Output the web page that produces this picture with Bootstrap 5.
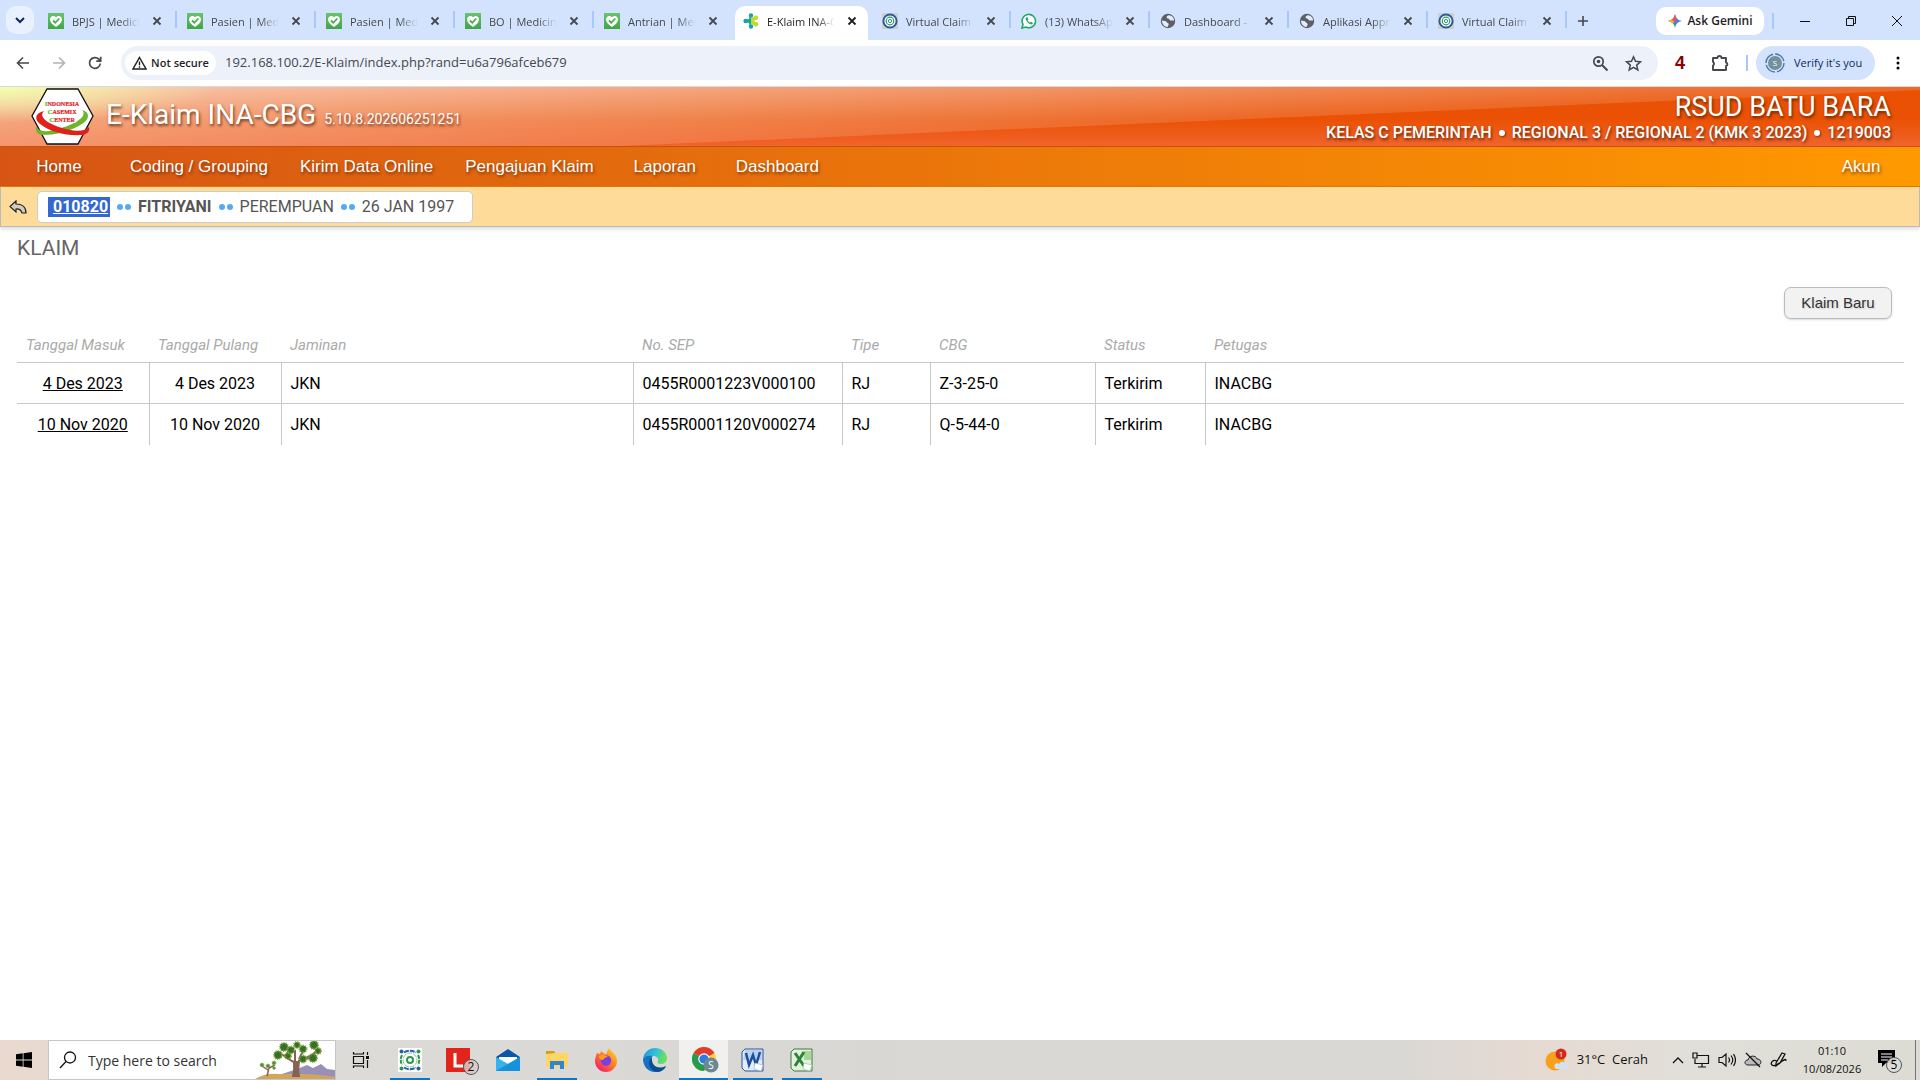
<!DOCTYPE html>
<html lang="id">
<head>
<meta charset="utf-8">
<meta name="viewport" content="width=device-width, initial-scale=1">
<title>E-Klaim INA-CBG</title>
<link rel="stylesheet" href="https://cdn.jsdelivr.net/npm/bootstrap@5.3.0/dist/css/bootstrap.min.css">
<style>
:root{--ui:"Open Sans","Noto Sans",sans-serif;--app:Roboto,"Noto Sans",sans-serif;--nav:"Liberation Sans",Arial,sans-serif}
body{font-family:var(--app);background:#fff;color:#000}
svg{display:block;flex:none}
button{border:0;background:none;padding:0;color:inherit}
/* browser frame */
.strip{background:#d3e3fd;height:40px;font:12px/16px var(--ui);color:#45484d}
.strip-menu{width:28px;height:28px;border-radius:10px;background:#eaf1fe;margin:6px 4px 0 6px}
.tab-slot{flex:0 1 139px;min-width:0;height:34px;margin-top:6px;padding-left:10px;padding-bottom:4px;position:relative;color:inherit;text-decoration:none}
.tab-name{width:70px;overflow:hidden;white-space:nowrap;font-size:11px;line-height:18px;padding-top:2px;-webkit-mask-image:linear-gradient(90deg,#000 70%,transparent 97%);mask-image:linear-gradient(90deg,#000 70%,transparent 97%)}
.tab-x{width:16px;height:16px;margin-left:7px}
.tab-slot.sep{border-right:2px solid #a8c7fa;border-image:linear-gradient(transparent 18%,#a8c7fa 18%,#a8c7fa 65%,transparent 65%) 1}
.tab-on{color:#1f1f1f}
.tab-on::before{content:"";position:absolute;inset:0 4px 0 2px;background:#fff;border-radius:10px 10px 0 0}
.tab-on>*{position:relative}
.win-btn{width:46px;height:34px}
.gemini{height:28px;width:108px;border-radius:10px;background:#fff;font-size:12px;font-weight:600;color:#1f1f1f}
.vline{width:2px;height:16px;background:#a8c7fa}
.toolbar{height:47px;border-bottom:1px solid #d5dbe3;background:#fff;font-family:var(--ui);padding-left:5px}
.tool{width:36px;height:34px}
.omnibox{height:34px;border-radius:17px;background:#ecf1fa;margin-left:8px}
.chip{height:24px;width:91px;border-radius:12px;background:#fff;font-size:11px;font-weight:600;color:#1f1f1f}
.url{border:0;background:none;font-size:13px;color:#45484d;padding:0 0 0 1px;outline:0}
.verify{height:34px;width:119px;border-radius:17px;background:#d3e3fd;font-size:11px;color:#0b2a5c}
.dots-menu{width:45px}
.ext-four{width:44px;font:700 18px/24px "Liberation Sans",sans-serif;color:#8b0000}
/* application header */
.hero{height:59px;background:linear-gradient(#ea5104 55%,#f1642c);color:#fff;text-shadow:1px 2px 3px rgba(60,20,0,.75)}
.gloss{position:absolute;inset:0;width:100%;height:100%}
.hero h1{font-size:28px;line-height:36px;font-weight:400}
.logo{margin-left:31px;text-shadow:none}
.brand{margin-left:11px}
.ver{font-size:14px}
.rs{padding-right:29px}
.rs-name{font-size:27px;line-height:32px}
.rs-info{font-size:16px;line-height:20px;font-weight:500}
.rs-info i{display:inline-block;width:6px;height:6px;border-radius:50%;background:#fff;margin:0 7px 2px;box-shadow:1px 1px 2px rgba(60,20,0,.6)}
.menu{height:41px;background:linear-gradient(90deg,#d65514,#ff9900);border-top:1px solid #c9520b;border-bottom:1px solid #e57a06;font-family:var(--nav);font-size:17px;padding:0 4px}
.menu a{min-width:110px;padding:0 16px;color:#fff;text-align:center;text-decoration:none;line-height:40px;text-shadow:1px 2px 3px rgba(60,20,0,.6)}
.patient{height:40px;background:#ffdb99;border:1px solid #bbb;border-top:0;box-shadow:0 2px 4px rgba(0,0,0,.15);padding-left:8px}
.patient-card{height:32px;border:1px solid #ccc;border-radius:5px;background:#fff;padding:0 18px 0 10px;margin-left:10px;font-size:16px;color:#555;white-space:nowrap}
.sel{background:#3367d1;color:#fff;font-weight:700;line-height:20px;padding:0 2px 0 5px;text-decoration:underline}
.dots i{width:6px;height:6px;border-radius:50%;background:#55aaf0}
.dots{gap:2px;margin:0 7px}
/* claim list */
.content{padding:8px 16px 0 17px}
.page-title{font-size:21px;line-height:26px;color:#666;font-weight:400}
.actions{padding:26px 12px 8px 0}
.btn-new{width:108px;height:32px;border:1px solid #bbb;border-radius:7px;background:#f2f2f2;font-family:var(--nav);font-size:15px;color:#333;box-shadow:0 1px 2px rgba(0,0,0,.15);text-shadow:1px 1px 2px rgba(0,0,0,.15)}
.claims{table-layout:fixed;width:100%;border-collapse:collapse}
.claims th{font-size:15px;line-height:20px;font-style:italic;font-weight:400;color:#aaa;padding:8px 9px 7px;height:35px}
.claims td{font-size:16px;line-height:24px;padding:9px 9px 7px;height:41px;border-top:1px solid #c8c8c8}
.claims td+td{border-left:1px solid #c8c8c8}
.claims a{color:#000}
/* taskbar */
.taskbar{height:40px;background:linear-gradient(90deg,#ead9cf 0,#dcdbd8 18%,#d8d7d4 45%,#d9d8d5 72%,#e6dad2 80%,#e0dfd8 88%,#dcdcd4);font-family:var(--ui);color:#111}
.start{width:48px;height:40px}
.find{width:288px;height:40px;background:#fff;border:1px solid #c6c6c6;padding-left:10px}
.find input{border:0;outline:0;background:none;width:140px;font-size:14px;padding:0;margin-left:11px;color:#333}
.find input::placeholder{color:#333;opacity:1}
.task{width:49px;height:40px;position:relative}
.task-view{width:49px}
.open::after{content:"";position:absolute;left:5px;right:4px;bottom:0;height:2px;background:#0078d7}
.live{background:#f0f0ee}
.live::after{left:0;right:0}
.temp{font-size:13px;white-space:pre}
.clock{width:80px;font-size:11px;line-height:18px}
.notice{margin-right:11px}
</style>
</head>
<body class="d-flex flex-column min-vh-100">
<svg width="0" height="0" class="position-absolute" aria-hidden="true">
<defs>
<linearGradient id="gr" x2="0" y2="1"><stop stop-color="#67c46b"/><stop offset="1" stop-color="#3fa648"/></linearGradient>
<symbol id="med" viewBox="0 0 16 16"><path fill="url(#gr)" d="M0 0h16v16H0z"/><path fill="#fff" d="M8 14C4 11.500 2 9 2 6.300 2 3.500 5.500 1.800 8 4.200 10.500 1.800 14 3.500 14 6.300 14 9 12 11.500 8 14z"/><path d="M5 7.500l2.300 2.300L11.300 5.500" fill="none" stroke="#46ad4e" stroke-width="1.800"/></symbol>
<symbol id="x" viewBox="0 0 16 16"><path d="M4.500 4.500l7 7M11.500 4.500l-7 7" stroke="currentColor" stroke-width="1.800"/></symbol>
<symbol id="vc" viewBox="0 0 16 16"><path fill="#cfcfcf" d="M0 0h16v16H0z"/><circle cx="8" cy="8" r="6.600" fill="#fff" stroke="#2c5d93" stroke-width="2"/><circle cx="8" cy="8" r="3.800" fill="none" stroke="#28a067" stroke-width="1.200"/><circle cx="8" cy="8" r="1.600" fill="none" stroke="#2f8d8d"/></symbol>
<symbol id="globe" viewBox="0 0 16 16"><circle cx="8" cy="8" r="7.200" fill="#5b5f66"/><path d="M9 2.200c-1.500.3-2.600 1-2.400 2.200.3 1.300 2.200.8 2.800 2 .5 1.300 2.200 1.400 4.600 1 .2-2.600-2-5-5-5.200zM2 7.500c2 .2 4.200.3 4.700 1.600.4 1.200 2 .9 2 2.200 0 1.200-1 1.500-.9 2.600C4.500 14 1.800 11 2 7.500z" fill="#e3ecfb"/></symbol>
<symbol id="eka" viewBox="0 0 16 16"><g fill="#13a89e"><circle cx="8" cy="2.500" r="2.200"/><circle cx="2.600" cy="8" r="2.200"/><circle cx="8" cy="13.500" r="2.200"/><path d="M7 2l-1 4-4 1v2l4 1 1 4h1V2z"/></g><g fill="#c5d92d"><circle cx="13" cy="4.800" r="2.200"/><circle cx="13" cy="11.200" r="2.200"/><path d="M8 5l5-2 1 3-3 2 3 2-1 3-5-2z"/></g></symbol>
</defs>
</svg>

<header>
<div class="strip d-flex align-items-start">
<button class="strip-menu d-flex align-items-center justify-content-center" aria-label="Cari tab"><svg width="12" height="12" viewBox="0 0 12 12"><path d="M2 4l4 4 4-4" fill="none" stroke="#0b2a5c" stroke-width="2"/></svg></button>
<nav class="d-flex flex-grow-1" style="min-width:0">
<a href="#" class="tab-slot sep d-flex align-items-center"><svg width="16" height="16"><use href="#med"/></svg><span class="tab-name ms-2">BPJS | Medicine</span><svg class="tab-x"><use href="#x"/></svg></a>
<a href="#" class="tab-slot sep d-flex align-items-center"><svg width="16" height="16"><use href="#med"/></svg><span class="tab-name ms-2">Pasien | Medicine</span><svg class="tab-x"><use href="#x"/></svg></a>
<a href="#" class="tab-slot sep d-flex align-items-center"><svg width="16" height="16"><use href="#med"/></svg><span class="tab-name ms-2">Pasien | Medicine</span><svg class="tab-x"><use href="#x"/></svg></a>
<a href="#" class="tab-slot sep d-flex align-items-center"><svg width="16" height="16"><use href="#med"/></svg><span class="tab-name ms-2">BO | Medicine</span><svg class="tab-x"><use href="#x"/></svg></a>
<a href="#" class="tab-slot d-flex align-items-center"><svg width="16" height="16"><use href="#med"/></svg><span class="tab-name ms-2">Antrian | Medicine</span><svg class="tab-x"><use href="#x"/></svg></a>
<a href="#" class="tab-slot tab-on d-flex align-items-center"><svg width="16" height="16"><use href="#eka"/></svg><span class="tab-name ms-2">E-Klaim INA-CBG</span><svg class="tab-x"><use href="#x"/></svg></a>
<a href="#" class="tab-slot sep d-flex align-items-center"><svg width="16" height="16"><use href="#vc"/></svg><span class="tab-name ms-2">Virtual Claim</span><svg class="tab-x"><use href="#x"/></svg></a>
<a href="#" class="tab-slot sep d-flex align-items-center"><svg width="16" height="16" viewBox="0 0 16 16"><path d="M1 15l1-3.600A6.700 6.700 0 1 1 4.700 14z" fill="#fff" stroke="#22a866" stroke-width="1.600"/><path d="M5 4.500c-1.500 2 2.500 7 6 7l1-1.600-2-1.200-1 .8C7.800 9 7 8 6.600 7.200l.8-1L6.500 4.300z" fill="#22a866"/></svg><span class="tab-name ms-2">(13) WhatsApp</span><svg class="tab-x"><use href="#x"/></svg></a>
<a href="#" class="tab-slot sep d-flex align-items-center"><svg width="16" height="16"><use href="#globe"/></svg><span class="tab-name ms-2">Dashboard -</span><svg class="tab-x"><use href="#x"/></svg></a>
<a href="#" class="tab-slot sep d-flex align-items-center"><svg width="16" height="16"><use href="#globe"/></svg><span class="tab-name ms-2">Aplikasi Approval</span><svg class="tab-x"><use href="#x"/></svg></a>
<a href="#" class="tab-slot sep d-flex align-items-center"><svg width="16" height="16"><use href="#vc"/></svg><span class="tab-name ms-2">Virtual Claim</span><svg class="tab-x"><use href="#x"/></svg></a>
<button class="win-btn d-flex align-items-center ps-2 mt-1" aria-label="Tab baru"><svg width="16" height="16" viewBox="0 0 16 16"><path d="M8 3v10M3 8h10" stroke="#45484d" stroke-width="1.600"/></svg></button>
</nav>
<div class="d-flex align-items-center pt-1">
<button class="gemini d-flex align-items-center justify-content-center gap-1"><svg width="16" height="16" viewBox="0 0 16 16"><defs><linearGradient id="gem" x1="0" y1="1" x2="1" y2="0"><stop offset=".25" stop-color="#35a56b"/><stop offset=".5" stop-color="#3b82f6"/><stop offset=".8" stop-color="#3b82f6"/></linearGradient></defs><path d="M8 1c.7 4 3 6.300 7 7-4 .7-6.300 3-7 7-.7-4-3-6.300-7-7 4-.7 6.300-3 7-7z" fill="url(#gem)"/><path d="M8 1c.7 4 1.500 5 3 6L7 8.500 1 8c4-.7 6.300-3 7-7z" fill="#ee5350"/><path d="M1 8l4-1 2.500 2L5 10.500C4 9 3 8.500 1 8z" fill="#f5b924"/></svg>Ask Gemini</button>
<span class="vline ms-2"></span>
<button class="win-btn d-flex align-items-center justify-content-center ms-2" aria-label="Minimalkan"><svg width="12" height="12"><path d="M1 6.500h10" stroke="#111"/></svg></button>
<button class="win-btn d-flex align-items-center justify-content-center" aria-label="Pulihkan"><svg width="12" height="12"><path d="M1.500 3.500h7v7h-7zM3.500 3V1.500h7v7H9" fill="none" stroke="#111"/></svg></button>
<button class="win-btn d-flex align-items-center justify-content-center" aria-label="Tutup"><svg width="12" height="12"><path d="M1 1l10 10M11 1L1 11" stroke="#111"/></svg></button>
</div>
</div>
<div class="toolbar d-flex align-items-center">
<button class="tool d-flex align-items-center justify-content-center" aria-label="Kembali"><svg width="16" height="16" viewBox="0 0 16 16"><path d="M14 8H3M8 2.500L2.500 8 8 13.500" fill="none" stroke="#45484d" stroke-width="1.600"/></svg></button>
<button class="tool d-flex align-items-center justify-content-center" aria-label="Maju"><svg width="16" height="16" viewBox="0 0 16 16"><path d="M2 8h11M8 2.500L13.500 8 8 13.500" fill="none" stroke="#b0b3b8" stroke-width="1.600"/></svg></button>
<button class="tool d-flex align-items-center justify-content-center" aria-label="Muat ulang"><svg width="16" height="16" viewBox="0 0 16 16"><path d="M13.300 8.500A5.400 5.400 0 1 1 11.800 4.200L13.600 6M13.700 1.800V6.200H9.300" fill="none" stroke="#45484d" stroke-width="1.700"/></svg></button>
<div class="omnibox d-flex align-items-center flex-grow-1 ps-1">
<button class="chip d-flex align-items-center justify-content-center gap-1"><svg width="15" height="14" viewBox="0 0 15 14"><path d="M7.500 1.500L14 13H1zM7.500 5.500v3.700M7.500 10.300v1.400" fill="none" stroke="#1f1f1f" stroke-width="1.400"/></svg>Not secure</button>
<input class="url flex-grow-1 ms-2" aria-label="Alamat" value="192.168.100.2/E-Klaim/index.php?rand=u6a796afceb679">
<svg class="me-3" width="17" height="17" viewBox="0 0 17 17"><circle cx="6.500" cy="6.500" r="4.700" fill="none" stroke="#45484d" stroke-width="1.700"/><path d="M10 10l5.500 5.500" stroke="#45484d" stroke-width="2"/><circle cx="6.500" cy="6.500" r="1.800" fill="#45484d"/></svg>
<svg class="me-3" width="17" height="17" viewBox="0 0 17 17"><path d="M8.500 1.800l2 4.500 4.900.5-3.700 3.300 1.100 4.900-4.300-2.600L4.200 15l1.100-4.900L1.600 6.800l4.900-.5z" fill="none" stroke="#45484d" stroke-width="1.500"/></svg>
</div>
<strong class="ext-four text-center">4</strong>
<button class="tool d-flex align-items-center justify-content-center" aria-label="Ekstensi"><svg width="18" height="18" viewBox="0 0 18 18"><path d="M2 4h4.500a2 2 0 0 1 4 0H15v4.500a1.800 1.800 0 0 1 0 3.500V16H2v-4.500a2 2 0 0 0 0-3.500z" fill="none" stroke="#45484d" stroke-width="1.900" stroke-linejoin="round"/></svg></button>
<span class="vline ms-2"></span>
<button class="verify d-flex align-items-center ms-2 ps-2 gap-2"><svg width="22" height="22" viewBox="0 0 22 22"><circle cx="11" cy="11" r="9" fill="none" stroke="#4a78a8" stroke-width="1.400" stroke-dasharray="12 2.100"/><circle cx="11" cy="11" r="7" fill="#74909a"/><text x="11" y="14" font-family="Open Sans" font-size="8" fill="#fff" text-anchor="middle">S</text></svg>Verify it's you</button>
<button class="dots-menu d-flex align-items-center justify-content-center" aria-label="Menu"><svg width="4" height="16"><circle cx="2" cy="3" r="1.500"/><circle cx="2" cy="8" r="1.500"/><circle cx="2" cy="13" r="1.500"/></svg></button>
</div>
</header>

<div class="hero position-relative d-flex justify-content-between">
<svg class="gloss" viewBox="0 0 1920 59" preserveAspectRatio="none"><defs><linearGradient id="gl" gradientUnits="userSpaceOnUse" x1="620" y1="59" x2="616" y2="-29"><stop stop-color="#fff" stop-opacity=".14"/><stop offset="1" stop-color="#fff" stop-opacity=".7"/></linearGradient><radialGradient id="yl" gradientUnits="userSpaceOnUse" cx="0" cy="0" r="220" gradientTransform="scale(1 .16)"><stop stop-color="#f2ffae"/><stop offset="1" stop-color="#f2ffae" stop-opacity="0"/></radialGradient></defs><path d="M0 0H1920V3L620 59H0z" fill="url(#gl)"/><path d="M0 0h240v40H0z" fill="url(#yl)"/></svg>
<div class="position-relative d-flex align-items-center">
<svg class="logo" width="64" height="57" viewBox="0 0 64 57"><path d="M16 1h31l15 27-15 28H16L1 28z" fill="#fff" stroke="#111" stroke-width="1.300"/><path d="M51 22c8 2 8 9 0 14-12 8-28 11-40 11-5-1-7-4-6-8 3 4 9 5 16 3.500C41 38 58 29 51 22z" fill="#6fb52c"/><path d="M13 23c-9 2-10 8-4 13 10 8 26 12 42 11 6-1 8-4 7-8-3 3-8 4.500-15 3.500C25 40 5 31 13 23z" fill="#e0201b"/><g font-family="Liberation Serif,serif" font-weight="700" font-size="6" fill="#e0201b" stroke="#e0201b" stroke-width=".2" text-anchor="middle"><text x="31" y="18"><tspan font-size="7" fill="#6fb52c" stroke="#6fb52c">I</tspan>NDONESIA</text><text x="31" y="26"><tspan font-size="7" fill="#6fb52c" stroke="#6fb52c">C</tspan>ASEMIX</text><text x="31" y="34" stroke="#fff" stroke-width="2">CENTER</text><text x="31" y="34"><tspan font-size="7" fill="#6fb52c" stroke="#6fb52c">C</tspan>ENTER</text></g></svg>
<div class="brand d-flex align-items-baseline gap-2 pb-1"><h1 class="m-0">E-Klaim INA-CBG</h1><span class="ver">5.10.8.202606251251</span></div>
</div>
<div class="rs position-relative text-end pt-1"><div class="rs-name">RSUD BATU BARA</div><div class="rs-info">KELAS C PEMERINTAH<i></i>REGIONAL 3 / REGIONAL 2 (KMK 3 2023)<i></i>1219003</div></div>
</div>
<nav class="menu d-flex"><a href="#">Home</a><a href="#">Coding / Grouping</a><a href="#">Kirim Data Online</a><a href="#">Pengajuan Klaim</a><a href="#">Laporan</a><a href="#">Dashboard</a><a href="#" class="ms-auto">Akun</a></nav>
<div class="patient d-flex align-items-center">
<a href="#" aria-label="Kembali"><svg width="18" height="14" viewBox="0 0 18 14"><path d="M7 1L1 6.500 7 12V9c3-.3 5 .8 6 4h4C17 7 13 4 7 4z" fill="#d3cdbf" stroke="#222" stroke-width="1.200"/></svg></a>
<div class="patient-card d-flex align-items-center"><span class="sel">010820</span><span class="dots d-flex"><i></i><i></i></span><b>FITRIYANI</b><span class="dots d-flex"><i></i><i></i></span><span>PEREMPUAN</span><span class="dots d-flex"><i></i><i></i></span><span>26 JAN 1997</span></div>
</div>

<main class="content flex-grow-1">
<h2 class="page-title m-0">KLAIM</h2>
<div class="actions d-flex justify-content-end"><button class="btn-new">Klaim Baru</button></div>
<table class="claims">
<colgroup><col style="width:132px"><col style="width:132px"><col style="width:352px"><col style="width:209px"><col style="width:88px"><col style="width:165px"><col style="width:110px"><col></colgroup>
<thead><tr><th>Tanggal Masuk</th><th>Tanggal Pulang</th><th>Jaminan</th><th>No. SEP</th><th>Tipe</th><th>CBG</th><th>Status</th><th>Petugas</th></tr></thead>
<tbody>
<tr><td class="text-center"><a href="#">4 Des 2023</a></td><td class="text-center">4 Des 2023</td><td>JKN</td><td>0455R0001223V000100</td><td>RJ</td><td>Z-3-25-0</td><td>Terkirim</td><td>INACBG</td></tr>
<tr><td class="text-center"><a href="#">10 Nov 2020</a></td><td class="text-center">10 Nov 2020</td><td>JKN</td><td>0455R0001120V000274</td><td>RJ</td><td>Q-5-44-0</td><td>Terkirim</td><td>INACBG</td></tr>
</tbody></table>
</main>

<footer class="taskbar d-flex align-items-center">
<button class="start d-flex align-items-center justify-content-center" aria-label="Start"><svg width="16" height="16" viewBox="0 0 16 16"><path d="M0 2.300L6.700 1.300V7.600H0zM7.500 1.200L16 0v7.600H7.500zM0 8.400h6.700v6.300L0 13.700zM7.500 8.400H16V16l-8.500-1.200z"/></svg></button>
<label class="find d-flex align-items-center"><svg width="18" height="18" viewBox="0 0 18 18"><circle cx="11" cy="6.500" r="5.500" fill="none" stroke="#111" stroke-width="1.300"/><path d="M7 10.500L1 17" stroke="#111" stroke-width="1.300"/></svg><input type="text" placeholder="Type here to search" aria-label="Type here to search">
<svg class="ms-auto" width="80" height="38" viewBox="0 0 80 38"><path d="M18 36l24-8 10-4 6 3 8-4 6 5 8 1v9H18z" fill="#9990b8"/><path d="M0 38q10-6 24-5 30-1 56 3v2z" fill="#d0a55c"/><path d="M38 35c2-5 1-9 1-14h5c-1 6-1 10 0 14zM41 22c-6-3-11-5-14-9M43 20c7-1 14-3 17-9M40 20V9M44 18l5-10M30 15l5-7" fill="#8a6150" stroke="#8a6150" stroke-width="2"/><path d="M12 35c1-3 1-5 2-8l6-3M13 29l-6-4" fill="none" stroke="#8a6150" stroke-width="1.500"/><g fill="#33702a" stroke="#86a53a" stroke-width="2" stroke-dasharray="1 1"><circle cx="29" cy="6" r="4"/><circle cx="36" cy="9" r="3.500"/><circle cx="23" cy="14" r="4"/><circle cx="33" cy="15" r="3"/><circle cx="42" cy="4" r="3"/><circle cx="48" cy="8" r="3.500"/><circle cx="59" cy="4" r="4"/><circle cx="63" cy="10" r="3"/><circle cx="58" cy="17" r="4"/><circle cx="48" cy="18" r="3.500"/></g><g fill="#56903a" stroke="#9cba68" stroke-dasharray="1 1"><circle cx="7" cy="24" r="2"/><circle cx="13" cy="25" r="2"/><circle cx="19" cy="22" r="2"/><circle cx="19" cy="27" r="1.500"/></g></svg></label>
<button class="task task-view d-flex align-items-center justify-content-center" aria-label="Task view"><svg width="18" height="16" viewBox="0 0 18 16" fill="none" stroke="#111" stroke-width="1.200"><path d="M1.500 4.500h10v7h-10zM1.500 0v2h10V0M1.500 16v-2h10v2M15.500 0v3M15.500 8v8"/><path d="M14 4h3v3h-3z" fill="#111" stroke="none"/></svg></button>
<button class="task open d-flex align-items-center justify-content-center ms-px" aria-label="Klaim"><svg width="24" height="24" viewBox="0 0 24 24"><path fill="#fff" d="M0 0h24v24H0z"/><path d="M6 4.500Q12 1 18 4.500M6 19.500Q12 23 18 19.500" fill="none" stroke="#2a5ca8" stroke-width="2" stroke-dasharray="5 1"/><path d="M4 7Q1.500 12 4 17M20 7Q22.500 12 20 17" fill="none" stroke="#2f9652" stroke-width="2" stroke-dasharray="4 1"/><g fill="#2f9652"><circle cx="3.500" cy="3.500" r="2" fill="#2a5ca8"/><circle cx="20.500" cy="3.500" r="2"/><circle cx="3.500" cy="20.500" r="2"/><circle cx="20.500" cy="20.500" r="2" fill="#2a5ca8"/></g><circle cx="12" cy="12" r="7" fill="none" stroke="#7ec393" stroke-dasharray="5 1"/><circle cx="12" cy="12" r="3" fill="none" stroke="#2f9652" stroke-width="2"/></svg></button>
<button class="task d-flex align-items-center justify-content-center" aria-label="L"><svg class="ms-2" width="34" height="30" viewBox="0 0 34 30"><path fill="#e1251b" d="M0 3h24v24H0z"/><path d="M9 8v13h8" fill="none" stroke="#fff" stroke-width="3"/><circle cx="25" cy="22" r="7.500" fill="#dcc9c6" fill-opacity=".85" stroke="#555"/><text x="25" y="26" font-family="Open Sans" font-size="12" text-anchor="middle" fill="#111">2</text></svg></button>
<button class="task d-flex align-items-center justify-content-center" aria-label="Mail"><svg width="24" height="24" viewBox="0 0 24 24"><path d="M0 9l12-8 12 8v5H0z" fill="#0b58a8"/><path d="M3 9h18v8H3z" fill="#fff"/><path d="M0 9l12 7 12-7v14H0z" fill="#35b2f0"/><path d="M0 23L24 9v14z" fill="#1592dc"/></svg></button>
<button class="task open d-flex align-items-center justify-content-center" aria-label="Explorer"><svg width="22" height="20" viewBox="0 0 22 20"><path d="M0 1h8l2 3H0z" fill="#d99c13"/><path d="M0 4l10-1h12v14H0z" fill="#ffd563"/><path d="M4 11h14v8h-4v-4H8v4H4z" fill="#2e87ce"/></svg></button>
<button class="task d-flex align-items-center justify-content-center" aria-label="Firefox"><svg width="24" height="24" viewBox="0 0 24 24"><defs><linearGradient id="ff" x1="1" y1="0" x2=".2" y2="1"><stop stop-color="#ffe22f"/><stop offset=".45" stop-color="#ff8a1f"/><stop offset="1" stop-color="#f5186f"/></linearGradient></defs><path d="M3 5l3 1 1-3c2 1 3 3 5 3l3-6c2 4 8 6 8 13a11 11 0 0 1-22 0C1 10 2 8 3 5z" fill="url(#ff)"/><circle cx="12" cy="12.500" r="5.200" fill="#7a3fe0"/><path d="M5 8c4-2 7-1 9 1-2 0-4 1-5 3-3 0-4-2-4-4z" fill="#ff9c1f"/></svg></button>
<button class="task d-flex align-items-center justify-content-center" aria-label="Edge"><svg width="24" height="24" viewBox="0 0 24 24"><defs><linearGradient id="ed" x2="1" y2=".3"><stop stop-color="#1f8fdf"/><stop offset=".6" stop-color="#35c3d6"/><stop offset="1" stop-color="#6be05a"/></linearGradient></defs><path d="M0 11C1 4 6 0 12 0c7 0 12 5 12 10 0 4-3 6-6 6s-4-1-3-3c1-3-2-5-5-5-5 0-8 2-10 3z" fill="url(#ed)"/><path d="M0 11c2-3 6-4 10-3-4 2-4 12 6 12 3 0 5-1 7-2-2 4-6 6-11 6C5 24 0 18 0 11z" fill="#1672c4"/><path d="M9 9c-6 5-2 14 5 15 4 0 7-2 9-6-8 4-15 0-14-9z" fill="#0c4f91"/></svg></button>
<button class="task open live d-flex align-items-center justify-content-center" aria-label="Chrome"><svg class="ms-1" width="28" height="26" viewBox="0 0 28 26"><circle cx="12" cy="12" r="12" fill="#ffcd40"/><path d="M12 12L1.600 6A12 12 0 0 1 22.400 6z" fill="#e33b2e"/><path d="M12 12L1.600 6A12 12 0 0 0 12 24l4-8z" fill="#269b4b"/><circle cx="12" cy="12" r="5.800" fill="#fff"/><circle cx="12" cy="12" r="4.600" fill="#2d7be5"/><circle cx="19" cy="18" r="7.500" fill="#6c8894"/><text x="19" y="22" font-family="Open Sans" font-size="10" text-anchor="middle" fill="#fff">S</text></svg></button>
<button class="task open d-flex align-items-center justify-content-center" aria-label="Word"><svg width="24" height="24" viewBox="0 0 24 24"><path d="M4 1h18v22H4l-3-3V4z" fill="#e4edf8" stroke="#2b5797"/><path d="M4 2h17v10H2z" fill="#b9d0ee"/><path d="M5 5l3 12 4-10 3 10 4-13" fill="none" stroke="#1d4f9f" stroke-width="2.500"/><path d="M14 15l8 2-2 6-7-2z" fill="#fff" stroke="#9bb4d6" stroke-width=".7"/></svg></button>
<button class="task open d-flex align-items-center justify-content-center" aria-label="Excel"><svg width="24" height="24" viewBox="0 0 24 24"><path d="M4 1h18v22H4l-3-3V4z" fill="#e3f1df" stroke="#3a7d3f"/><path d="M14 3h7v9h-7z" fill="#a9d49a"/><path d="M5 5l9 13M14 4L5 18" stroke="#2c8437" stroke-width="3"/><path d="M14 15l8 2-2 6-7-2z" fill="#fff" stroke="#9cc79e" stroke-width=".7"/></svg></button>
<div class="ms-auto d-flex align-items-center">
<svg width="24" height="24" viewBox="0 0 24 24"><circle cx="10" cy="13" r="9.500" fill="#f9a01b"/><path d="M10 20c-2-4 2-6 4-4 2-4 7-2 7 1 3 0 2 4 0 4H11z" fill="#cfe2f8"/><circle cx="16" cy="6" r="5.500" fill="#d42a1e"/><text x="16" y="9" font-family="Open Sans" font-size="8" text-anchor="middle" fill="#fff">1</text></svg>
<span class="temp ms-2">31°C  Cerah</span>
<svg class="ms-4" width="12" height="8"><path d="M1 7l5-5 5 5" fill="none" stroke="#111" stroke-width="1.300"/></svg>
<svg class="ms-2" width="18" height="16" viewBox="0 0 18 16" fill="none" stroke="#111" stroke-width="1.200"><path d="M5 3.500h11.500v8H3V7M10 11.500V15M6 15h8M1 1h4v5H1z"/></svg>
<svg class="ms-2" width="18" height="16" viewBox="0 0 18 16" fill="none" stroke="#111" stroke-width="1.200"><path d="M1 5.500h3L8 2v12l-4-3.500H1zM10.500 5.500q2 2.500 0 5M13 3.500q3.500 4.500 0 9M15.500 2q4 6 0 12"/></svg>
<svg class="ms-2" width="18" height="16" viewBox="0 0 18 16"><path d="M4 13C0 13 0 8 4 8c1-5 8-5 9-1 5 0 5 6 1 6z" fill="#bbb" stroke="#222"/><path d="M2 1l14 14" stroke="#111" stroke-width="1.300"/></svg>
<svg class="ms-2" width="18" height="18" viewBox="0 0 18 18" fill="none" stroke="#111" stroke-width="1.300"><path d="M6 12l6-10 3 1-5 9-4 3zM7 10c-4-2-7 2-5 4s6-1 9-3 5-4 5-1"/></svg>
<div class="clock text-center ms-1">01:10<br>10/08/2026</div>
<svg class="ms-1" width="28" height="28" viewBox="0 0 28 28"><path d="M2 4h17v13H10l-4 4v-4H2z"/><path d="M5 8h11M5 11h11M5 14h7" stroke="#fff"/><circle cx="18" cy="19" r="7.500" fill="#ddd" fill-opacity=".9" stroke="#555"/><text x="18" y="23" font-family="Open Sans" font-size="12" text-anchor="middle">5</text></svg>
<span class="notice"></span>
</div>
<span class="border-start border-secondary align-self-stretch pe-1"></span>
</footer>
<script src="https://cdn.jsdelivr.net/npm/bootstrap@5.3.0/dist/js/bootstrap.bundle.min.js"></script>
</body>
</html>
